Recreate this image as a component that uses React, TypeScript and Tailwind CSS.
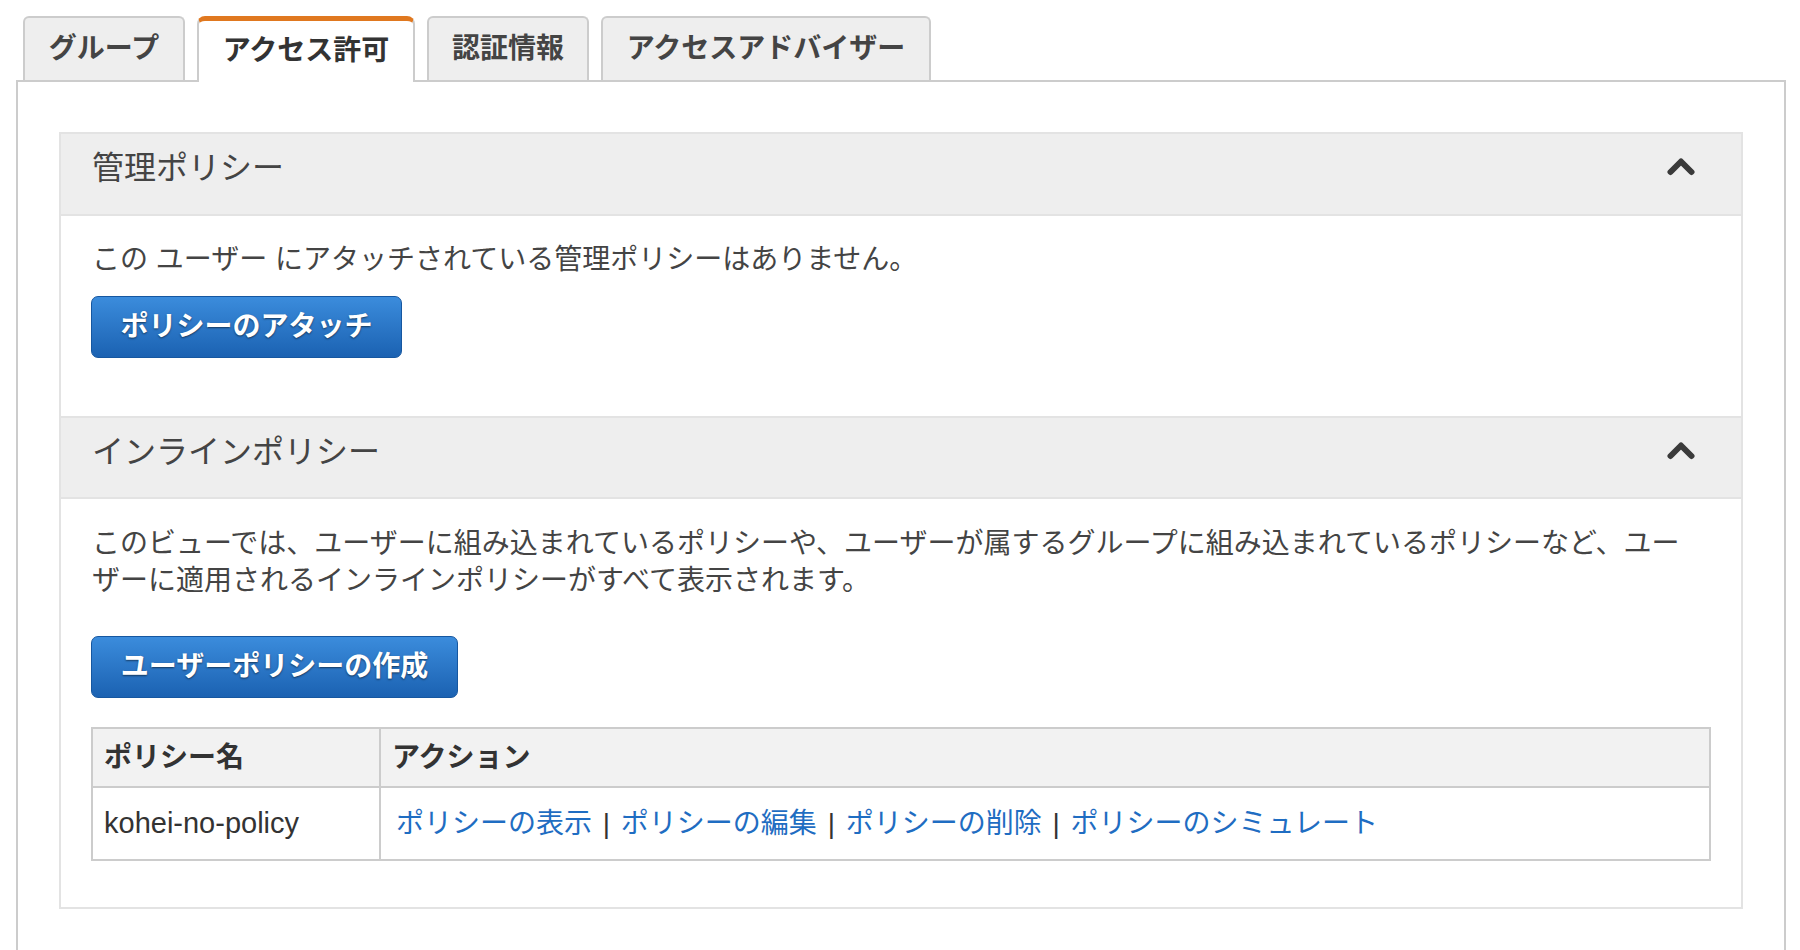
import React from "react";

const FONT = "font-['Liberation_Sans','Noto_Sans_CJK_JP',sans-serif]";

function Chevron() {
  return (
    <svg width="28" height="19" viewBox="0 0 28 19" className="mb-[15px]">
      <polyline
        points="3.5,15 14,4.5 24.5,15"
        fill="none"
        stroke="#3a3a3a"
        strokeWidth="6"
        strokeLinecap="round"
        strokeLinejoin="round"
      />
    </svg>
  );
}

function Tab({ label, width, active }: { label: string; width: string; active?: boolean }) {
  if (active) {
    return (
      <div
        className={`${width} h-[66px] bg-white rounded-t-[8px] border-x-2 border-t-[5px] border-x-[#cccccc] border-t-[#e0781f] flex items-center justify-center pb-[2px] text-[28px] font-bold text-[#333333]`}
      >
        {label}
      </div>
    );
  }
  return (
    <div
      className={`${width} h-[64px] bg-[#eeeeee] rounded-t-[6px] border-x-2 border-t-2 border-[#cccccc] flex items-center justify-center text-[28px] font-bold text-[#444444]`}
    >
      {label}
    </div>
  );
}

function BlueButton({ label, width }: { label: string; width: string }) {
  return (
    <button
      className={`${width} h-[62px] rounded-[7px] border border-[#1657a0] bg-gradient-to-b from-[#3b8cdc] to-[#1b62b2] text-white text-[28px] font-bold flex items-center justify-center [text-shadow:0_1px_2px_rgba(0,0,0,0.55)]`}
    >
      {label}
    </button>
  );
}

function Sep() {
  return <span className="text-[#333333] mx-[3px]"> | </span>;
}

export default function App() {
  return (
    <div className={`w-[1800px] h-[950px] overflow-hidden bg-white pt-[16px] ${FONT}`}>
      <div className="ml-[16px] mr-[14px]">
        <div className="relative z-10 flex items-start gap-[12px] pl-[7px] -mb-[2px]">
          <Tab label="グループ" width="w-[162px]" />
          <Tab label="アクセス許可" width="w-[218px]" active />
          <Tab label="認証情報" width="w-[162px]" />
          <Tab label="アクセスアドバイザー" width="w-[330px]" />
        </div>
        <div className="border-2 border-[#cccccc] h-[900px] pt-[50px] px-[41px]">
          <div className="border-2 border-[#e3e3e3] bg-white">
            <div className="h-[82px] bg-[#eeeeee] border-b-2 border-[#e3e3e3] flex items-center justify-between pl-[31px] pr-[46px]">
              <div className="text-[32px] text-[#444444] leading-none mb-[12px]">管理ポリシー</div>
              <Chevron />
            </div>
            <div className="px-[30px] pt-[26px] pb-[58px]">
              <p className="text-[28px] leading-[36px] text-[#444444] pl-[1px]">
                この ユーザー にアタッチされている管理ポリシーはありません。
              </p>
              <div className="mt-[18px]">
                <BlueButton label="ポリシーのアタッチ" width="w-[311px]" />
              </div>
            </div>
            <div className="h-[83px] bg-[#eeeeee] border-y-2 border-[#e3e3e3] flex items-center justify-between pl-[31px] pr-[46px]">
              <div className="text-[32px] text-[#444444] leading-none mb-[12px]">インラインポリシー</div>
              <Chevron />
            </div>
            <div className="px-[30px] pt-[26px] pb-[46px]">
              <p className="text-[28px] leading-[37px] text-[#444444] pl-[1px] max-w-[1602px]">
                このビューでは、ユーザーに組み込まれているポリシーや、ユーザーが属するグループに組み込まれているポリシーなど、ユーザーに適用されるインラインポリシーがすべて表示されます。
              </p>
              <div className="mt-[37px]">
                <BlueButton label="ユーザーポリシーの作成" width="w-[367px]" />
              </div>
              <table className="mt-[29px] w-full border-collapse border-2 border-[#cccccc]">
                <thead>
                  <tr className="bg-[#f2f2f2] h-[59px]">
                    <th className="w-[288px] border-2 border-[#cccccc] text-left pl-[11px] text-[28px] font-bold text-[#333333]">
                      ポリシー名
                    </th>
                    <th className="border-2 border-[#cccccc] text-left pl-[11px] text-[28px] font-bold text-[#333333]">
                      アクション
                    </th>
                  </tr>
                </thead>
                <tbody>
                  <tr className="h-[73px]">
                    <td className="border-2 border-[#cccccc] pl-[11px] text-[29px] text-[#333333]">
                      kohei-no-policy
                    </td>
                    <td className="border-2 border-[#cccccc] pl-[15px] text-[28px] text-[#1f6dc2]">
                      <span>ポリシーの表示</span>
                      <Sep />
                      <span>ポリシーの編集</span>
                      <Sep />
                      <span>ポリシーの削除</span>
                      <Sep />
                      <span>ポリシーのシミュレート</span>
                    </td>
                  </tr>
                </tbody>
              </table>
            </div>
          </div>
        </div>
      </div>
    </div>
  );
}
